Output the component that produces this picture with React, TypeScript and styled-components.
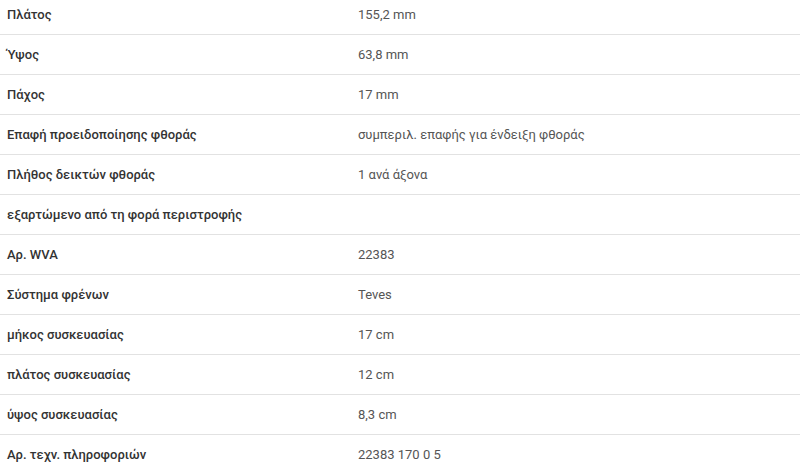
import styled, { createGlobalStyle } from 'styled-components';

const GlobalStyle = createGlobalStyle`
    html, body {
        margin: 0;
        padding: 0;
        background: #ffffff;
        overflow: hidden;
    }
    body {
        font-family: Roboto, "Noto Sans", "Liberation Sans", sans-serif;
    }
`

const SpecTable = styled.div`
    width: 800px;
    margin-top: -5px;
    display: flex;
    flex-direction: column;
`

const SpecRow = styled.div`
    display: grid;
    grid-template-columns: 358px 1fr;
    align-items: center;
    height: 39px;
    border-bottom: 1px solid #e2e2e2;

    &:last-child {
        border-bottom-color: transparent;
    }
`

const Label = styled.div`
    padding-left: 7px;
    font-size: 13px;
    font-weight: 500;
    color: #333333;
`

const Value = styled.div`
    font-size: 13px;
    font-weight: 400;
    color: #555555;
`

const specs: [string, string][] = [
    ["Πλάτος", "155,2 mm"],
    ["Ύψος", "63,8 mm"],
    ["Πάχος", "17 mm"],
    ["Επαφή προειδοποίησης φθοράς", "συμπεριλ. επαφής για ένδειξη φθοράς"],
    ["Πλήθος δεικτών φθοράς", "1 ανά άξονα"],
    ["εξαρτώμενο από τη φορά περιστροφής", ""],
    ["Αρ. WVA", "22383"],
    ["Σύστημα φρένων", "Teves"],
    ["μήκος συσκευασίας", "17 cm"],
    ["πλάτος συσκευασίας", "12 cm"],
    ["ύψος συσκευασίας", "8,3 cm"],
    ["Αρ. τεχν. πληροφοριών", "22383 170 0 5"],
];

const App = () => {
    return (
        <>
            <GlobalStyle />
            <SpecTable>
                {specs.map(([label, value]) => (
                    <SpecRow key={label}>
                        <Label>{label}</Label>
                        <Value>{value}</Value>
                    </SpecRow>
                ))}
            </SpecTable>
        </>
    )
}

export default App
